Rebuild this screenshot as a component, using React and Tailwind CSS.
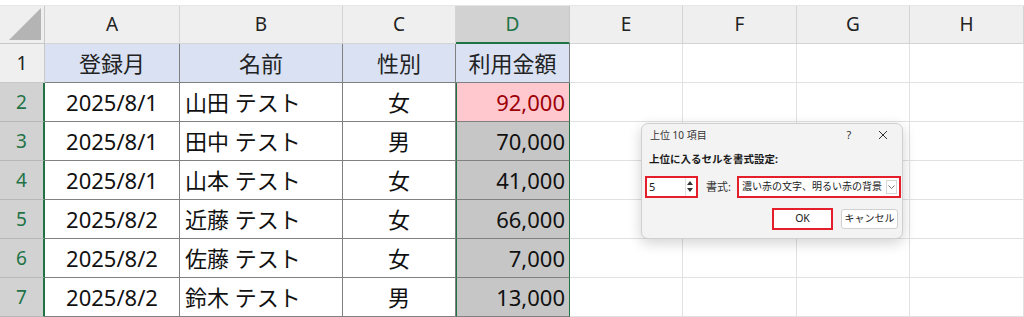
import React from "react";

const COLS = ["A", "B", "C", "D", "E", "F", "G", "H"];
const WIDTHS = "45px 135px 163px 113px 114px 113px 114px 113px 1fr";

const DATA = [
  ["2025/8/1", "山田 テスト", "女", "92,000"],
  ["2025/8/1", "田中 テスト", "男", "70,000"],
  ["2025/8/1", "山本 テスト", "女", "41,000"],
  ["2025/8/2", "近藤 テスト", "女", "66,000"],
  ["2025/8/2", "佐藤 テスト", "女", "7,000"],
  ["2025/8/2", "鈴木 テスト", "男", "13,000"],
];

const font = { fontFamily: '"Noto Sans", "Noto Sans CJK JP", sans-serif' };

function ColHeader() {
  return (
    <>
      <div className="relative h-[38px] bg-[#efefef] border-r border-b border-[#c8c8c8]">
        <div className="absolute right-[3px] bottom-[3px] w-0 h-0 border-l-[32px] border-l-transparent border-b-[32px] border-b-[#b4b4b4]" />
      </div>
      {COLS.map((c) =>
        c === "D" ? (
          <div key={c} className="h-[38px] bg-[#d2d2d2] border-r border-[#c8c8c8] border-b-2 border-b-[#217346] flex items-center justify-center text-[19px] text-[#217346]">
            {c}
          </div>
        ) : (
          <div key={c} className="h-[38px] bg-[#efefef] border-r border-b border-[#d4d4d4] flex items-center justify-center text-[19px] text-[#222]">
            {c}
          </div>
        )
      )}
    </>
  );
}

function RowHead({ n }) {
  const sel = n > 1;
  return (
    <div
      className={
        "h-[39px] flex items-center justify-center text-[19px] border-b " +
        (sel
          ? "bg-[#d2d2d2] text-[#217346] border-[#b8b8b8] border-r-2 border-r-[#217346]"
          : "bg-[#efefef] text-[#222] border-[#c8c8c8] border-r border-r-[#c8c8c8]")
      }
    >
      {n}
    </div>
  );
}

function Empty() {
  return <div className="h-[39px] bg-white border-r border-b border-[#e1e1e1]" />;
}

export default function App() {
  return (
    <div className="relative w-[1024px] h-[317px] overflow-hidden bg-white" style={font}>
      <div className="h-[6px] bg-white border-b border-[#e6e6e6]" />
      <div className="grid" style={{ gridTemplateColumns: WIDTHS }}>
        <ColHeader />

        {/* row 1: headers */}
        <RowHead n={1} />
        {["登録月", "名前", "性別", "利用金額"].map((t) => (
          <div key={t} className="h-[39px] bg-[#d9e1f2] border-r border-b border-[#808080] flex items-center justify-center text-[22px] text-[#222]">
            {t}
          </div>
        ))}
        {[0, 1, 2, 3].map((i) => (
          <Empty key={i} />
        ))}

        {DATA.map((r, i) => (
          <React.Fragment key={i}>
            <RowHead n={i + 2} />
            <div className="h-[39px] border-r border-b border-[#808080] flex items-center justify-center text-[22px] text-[#111]">{r[0]}</div>
            <div className="h-[39px] border-r border-b border-[#808080] flex items-center pl-[5px] text-[22px] text-[#111] whitespace-nowrap">{r[1]}</div>
            <div className="h-[39px] border-r border-b border-[#808080] flex items-center justify-center text-[22px] text-[#111]">{r[2]}</div>
            <div
              className={
                "h-[39px] border-b border-b-[#808080] border-x border-x-[#217346] flex items-center justify-end pr-[4px] text-[22px] " +
                (i === 0 ? "bg-[#ffc7ce] text-[#9c0006]" : "bg-[#c6c6c6] text-[#111]")
              }
            >
              {r[3]}
            </div>
            {[0, 1, 2, 3].map((j) => (
              <Empty key={j} />
            ))}
          </React.Fragment>
        ))}
      </div>

      {/* dialog */}
      <div className="absolute left-[641px] top-[123px] w-[262px] h-[116px] rounded-[7px] bg-[#f3f3f3] border border-[#cfcfcf] shadow-[0_4px_14px_rgba(0,0,0,0.18)] text-[#1a1a1a] flex flex-col">
        <div className="h-[22px] flex items-center pl-[8px] pr-[10px] text-[10px] text-[#333]">
          <span className="flex-1">上位 10 項目</span>
          <span className="w-[14px] text-center text-[11px] mr-[22px]">?</span>
          <svg width="10" height="10" viewBox="0 0 10 10" className="mr-[4px]">
            <path d="M1 1 L9 9 M9 1 L1 9" stroke="#333" strokeWidth="1" />
          </svg>
        </div>
        <div className="mt-[6px] pl-[7px] text-[10.5px] font-bold">上位に入るセルを書式設定:</div>
        <div className="mt-[8px] flex items-center pl-[3px]">
          <div className="w-[53px] h-[22px] border-2 border-[#e41e2b] flex">
            <div className="flex-1 bg-white flex items-center pl-[2px] text-[11px]">5</div>
            <div className="w-[11px] bg-white flex flex-col items-center justify-center gap-[3px] border-l border-[#e0e0e0] pr-[2px]">
              <svg width="6" height="4" viewBox="0 0 6 4"><path d="M0 4 L3 0 L6 4 Z" fill="#333" /></svg>
              <svg width="6" height="4" viewBox="0 0 6 4"><path d="M0 0 L3 4 L6 0 Z" fill="#333" /></svg>
            </div>
          </div>
          <span className="ml-[8px] text-[11px] text-[#333]">書式:</span>
          <div className="ml-[6px] w-[164px] h-[22px] border-2 border-[#e41e2b] bg-white flex items-center">
            <span className="flex-1 min-w-0 overflow-hidden pl-[3px] text-[10px] whitespace-nowrap">濃い赤の文字、明るい赤の背景</span>
            <div className="shrink-0 w-[11px] h-[14px] mx-[2px] border border-[#d6d6d6] flex items-center justify-center">
              <svg width="7" height="4" viewBox="0 0 7 4"><path d="M0.5 0.5 L3.5 3.5 L6.5 0.5" stroke="#555" fill="none" strokeWidth="0.8" /></svg>
            </div>
          </div>
        </div>
        <div className="mt-[10px] flex items-center justify-end pr-[4px] gap-[8px]">
          <div className="w-[61px] h-[22px] border-2 border-[#e41e2b] bg-white flex items-center justify-center text-[10.5px]">OK</div>
          <div className="w-[57px] h-[20px] rounded-[3px] border border-[#d0d0d0] bg-white flex items-center justify-center text-[10px]">キャンセル</div>
        </div>
      </div>
    </div>
  );
}
